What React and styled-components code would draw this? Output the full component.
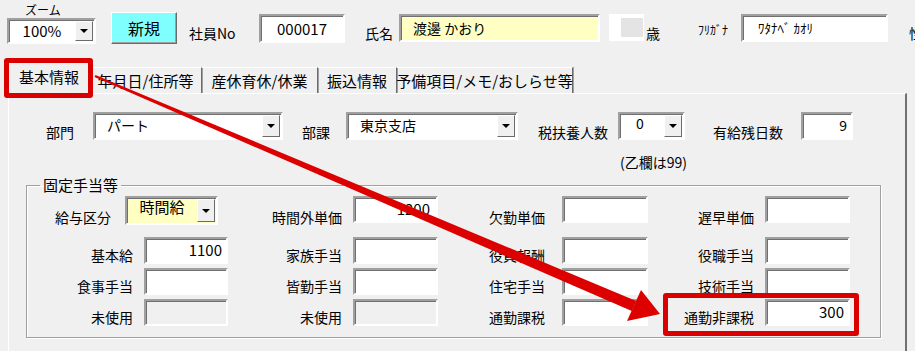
import React from "react";
import styled, { createGlobalStyle } from "styled-components";

const GlobalStyle = createGlobalStyle`
  html, body { margin: 0; padding: 0; background: #f0f0f0; }
  body {
    font-family: "Noto Sans CJK JP", "Noto Sans", sans-serif;
    font-size: 14px;
    color: #000;
  }
`;

const Page = styled.div`
  position: relative;
  width: 915px;
  height: 351px;
  overflow: hidden;
  background: #f0f0f0;
`;

/* ---------- header ---------- */

const TopBar = styled.div`
  display: flex;
  align-items: flex-start;
  height: 47px;
  padding-left: 7px;
  white-space: nowrap;
`;

const ZoomBlock = styled.div`
  display: flex;
  flex-direction: column;
  margin-top: 2px;
  flex: none;
`;

const SmallCaption = styled.span`
  font-size: 12px;
  line-height: 16px;
  margin-left: 18px;
`;

const NewButton = styled.button`
  flex: none;
  width: 66px;
  height: 32px;
  margin: 12px 0 0 15px;
  padding: 0;
  background: #80ffff;
  border: 1px solid;
  border-color: #fff #6b6b6b #6b6b6b #fff;
  box-shadow: inset -1px -1px 0 #a0a0a0;
  font-family: inherit;
  font-size: 16px;
  color: #000;
`;

const HeadLabel = styled.span`
  width: ${p => p.$w}px;
  margin: ${p => p.$top || 25}px 0 0 ${p => p.$ml || 0}px;
  font-size: ${p => p.$size || 14}px;
  line-height: 16px;
  flex: none;
`;

const Field = styled.div`
  box-sizing: border-box;
  display: flex;
  align-items: ${p => (p.$center ? "center" : "flex-start")};
  justify-content: ${p => (p.$align === "right" ? "flex-end" : p.$align === "center" ? "center" : "flex-start")};
  width: ${p => p.$w}px;
  height: ${p => p.$h || 27}px;
  margin-top: ${p => p.$top || 0}px;
  padding: ${p => (p.$center ? "0" : "2px")} ${p => p.$pr ?? 6}px 0 ${p => p.$pl ?? 6}px;
  background: ${p => p.$bg || "#fff"};
  border: 2px solid;
  border-color: #a0a0a0 #fff #fff #a0a0a0;
  box-shadow: inset 1px 1px 0 #707070;
  font-size: ${p => p.$size || 14}px;
  line-height: 18px;
  flex: none;
  white-space: nowrap;
`;

const AgeBox = styled.div`
  width: 35px;
  height: 27px;
  margin: 14px 0 0 9px;
  background: #fff;
  display: flex;
  align-items: center;
  justify-content: flex-end;
  padding-right: 1px;
  box-sizing: border-box;
  flex: none;
  &::after {
    content: "";
    width: 22px;
    height: 19px;
    background: #e4e4e4;
  }
`;

/* ---------- combo ---------- */

const ComboBox = styled.div`
  box-sizing: border-box;
  display: flex;
  align-items: stretch;
  width: ${p => p.$w}px;
  height: ${p => p.$h || 28}px;
  margin-left: ${p => p.$ml || 0}px;
  background: ${p => p.$bg || "#fff"};
  border: 2px solid;
  border-color: #a0a0a0 #fff #fff #a0a0a0;
  box-shadow: inset 1px 1px 0 #707070;
  flex: none;
`;

const ComboText = styled.span`
  flex: 1;
  padding: ${p => p.$pt ?? 0}px 0 0 ${p => p.$pl ?? 0}px;
  text-align: ${p => p.$align || "left"};
  line-height: ${p => p.$lh || 18}px;
  font-size: ${p => p.$size || 14}px;
  white-space: nowrap;
`;

const DropButton = styled.span`
  width: 18px;
  margin: 1px 1px 1px 0;
  background: #f0f0f0;
  border: 1px solid;
  border-color: #fff #6b6b6b #6b6b6b #fff;
  box-sizing: border-box;
  display: flex;
  align-items: center;
  justify-content: center;
  &::after {
    content: "";
    border-left: 4px solid transparent;
    border-right: 4px solid transparent;
    border-top: 4px solid #000;
  }
`;

const Combo = ({ w, h, ml, bg, children, align, pl, pt, lh, size }) => (
  <ComboBox $w={w} $h={h} $ml={ml} $bg={bg}>
    <ComboText $align={align} $pl={pl} $pt={pt} $lh={lh} $size={size}>{children}</ComboText>
    <DropButton />
  </ComboBox>
);

/* ---------- tabs ---------- */

const TabRow = styled.div`
  display: flex;
  align-items: flex-end;
  height: 31px;
  margin-top: 15px;
  padding-left: 8px;
`;

const Tab = styled.div`
  box-sizing: border-box;
  flex: none;
  width: ${p => p.$w}px;
  height: ${p => (p.$active ? 31 : 26)}px;
  display: flex;
  align-items: center;
  justify-content: center;
  border-top: 1px solid #fff;
  border-left: ${p => (p.$active ? "1px solid #fff" : "none")};
  border-right: ${p => (p.$active ? "1px solid #a0a0a0" : "1px solid #6b6b6b")};
  box-shadow: ${p => (p.$active ? "none" : "1px 0 0 #a0a0a0")};
  padding-bottom: ${p => (p.$active ? 3 : 0)}px;
  font-size: 15px;
  white-space: nowrap;
`;

/* ---------- panel ---------- */

const Panel = styled.div`
  box-sizing: border-box;
  width: 899px;
  height: 260px;
  margin-left: 8px;
  border-top: 1px solid #fff;
  border-left: 1px solid #fff;
  border-right: 2px solid #707070;
`;

const TopRow = styled.div`
  display: flex;
  align-items: flex-end;
  height: 28px;
  margin-top: 18px;
`;

const RowLabel = styled.span`
  width: ${p => p.$w}px;
  margin-left: ${p => p.$ml || 0}px;
  line-height: 16px;
  flex: none;
  white-space: nowrap;
`;

const Note = styled.div`
  margin: 13px 0 0 611px;
  line-height: 18px;
`;

const Group = styled.fieldset`
  box-sizing: border-box;
  width: 855px;
  height: 161px;
  margin: 6px 0 0 17px;
  padding: 3px 0 0 0;
  border: 1px solid #a0a0a0;
  box-shadow: 1px 1px 0 #fff, inset 1px 1px 0 #fff;
`;

const Legend = styled.legend`
  margin-left: 13px;
  padding: 0 3px;
  font-size: 15px;
  line-height: 16px;
`;

const FieldGrid = styled.div`
  display: grid;
  grid-template-columns: 117px 84px 125px 85px 124px 86px 117px 85px;
  grid-auto-rows: ${p => p.$row || 27}px;
  row-gap: 4px;
  margin-top: ${p => p.$top || 0}px;
`;

const GridLabel = styled.span`
  align-self: end;
  text-align: right;
  padding-right: ${p => p.$pr || 11}px;
  margin-bottom: ${p => p.$mb ?? 0}px;
  line-height: 18px;
  white-space: nowrap;
`;

const PayCell = styled.div`
  grid-column: span 2;
  display: flex;
  align-items: flex-end;
`;

/* ---------- annotations ---------- */

const Highlight = styled.div`
  position: absolute;
  left: ${p => p.$x}px;
  top: ${p => p.$y}px;
  width: ${p => p.$w}px;
  height: ${p => p.$h}px;
  box-sizing: border-box;
  border: 5px solid #db0000;
  border-radius: 3px;
  pointer-events: none;
`;

const ArrowLayer = styled.svg`
  position: absolute;
  left: 0;
  top: 0;
  pointer-events: none;
`;

const allowances = [
  [
    ["基本給", "1100"],
    ["家族手当", ""],
    ["役員報酬", ""],
    ["役職手当", ""],
  ],
  [
    ["食事手当", ""],
    ["皆勤手当", ""],
    ["住宅手当", ""],
    ["技術手当", ""],
  ],
  [
    ["未使用", "", true],
    ["未使用", "", true],
    ["通勤課税", ""],
    ["通勤非課税", "300"],
  ],
];

const widths = [84, 85, 86, 85];

export default function App() {
  return (
    <Page>
      <GlobalStyle />
      <TopBar>
        <ZoomBlock>
          <SmallCaption>ズーム</SmallCaption>
          <Combo w={89} h={26} align="center" pl={0} lh={22} size={15}>100%</Combo>
        </ZoomBlock>
        <NewButton>新規</NewButton>
        <HeadLabel $w={70} $ml={12}>社員No</HeadLabel>
        <Field $w={86} $h={29} $top={14} $center $align="center" $size={15}>000017</Field>
        <HeadLabel $w={34} $ml={20}>氏名</HeadLabel>
        <Field $w={201} $h={28} $top={14} $center $bg="#ffffc4" $pl={12}>渡邊 かおり</Field>
        <AgeBox />
        <HeadLabel $w={52} $ml={2}>歳</HeadLabel>
        <HeadLabel $w={43} $size={12} $top={22}>ﾌﾘｶﾞﾅ</HeadLabel>
        <Field $w={147} $h={28} $top={14} $center $pl={15} $size={13}>ﾜﾀﾅﾍﾞ ｶｵﾘ</Field>
        <HeadLabel $w={20} $ml={21}>性</HeadLabel>
      </TopBar>

      <TabRow>
        <Tab $w={82} $active>基本情報</Tab>
        <Tab $w={112}>年月日/住所等</Tab>
        <Tab $w={116}>産休育休/休業</Tab>
        <Tab $w={79}>振込情報</Tab>
        <Tab $w={176}>予備項目/メモ/おしらせ等</Tab>
      </TabRow>

      <Panel>
        <TopRow>
          <RowLabel $w={47} $ml={37}>部門</RowLabel>
          <Combo w={190} pl={12} pt={2}>パート</Combo>
          <RowLabel $w={44} $ml={19}>部課</RowLabel>
          <Combo w={172} pl={12} pt={2}>東京支店</Combo>
          <RowLabel $w={80} $ml={20}>税扶養人数</RowLabel>
          <Combo w={67} pl={16} pt={0}>0</Combo>
          <RowLabel $w={88} $ml={28}>有給残日数</RowLabel>
          <Field $w={52} $h={28} $align="right" $pr={4}>9</Field>
        </TopRow>
        <Note>(乙欄は99)</Note>

        <Group>
          <Legend>固定手当等</Legend>
          <FieldGrid $row={29}>
            <PayCell>
              <RowLabel $w={70} $ml={28}>給与区分</RowLabel>
              <Combo w={93} h={29} bg="#ffffc4" align="center" pt={0} size={15}>時間給</Combo>
            </PayCell>
            <GridLabel $mb={-1}>時間外単価</GridLabel>
            <Field $w={85} $align="right" $pr={6} $size={15}>1200</Field>
            <GridLabel $pr={17} $mb={-1}>欠勤単価</GridLabel>
            <Field $w={86} />
            <GridLabel $mb={-1}>遅早単価</GridLabel>
            <Field $w={85} />
          </FieldGrid>
          <FieldGrid $top={12}>
            {allowances.map((row, r) =>
              row.map(([label, value, disabled], c) => (
                <React.Fragment key={`${r}-${c}`}>
                  <GridLabel $pr={c === 2 ? 17 : 11}>{label}</GridLabel>
                  <Field
                    $w={widths[c]}
                    $align="right"
                    $pr={4}
                    $size={15}
                    $bg={disabled ? "#f0f0f0" : "#fff"}
                  >
                    {value}
                  </Field>
                </React.Fragment>
              ))
            )}
          </FieldGrid>
        </Group>
      </Panel>

      <Highlight $x={4} $y={58} $w={89} $h={40} />
      <Highlight $x={663} $y={293} $w={196} $h={43} />

      <ArrowLayer width="915" height="351" viewBox="0 0 915 351">
        <polygon
          points="94.5,77.1 95.5,74.9 636.2,300.9 631.8,311.1"
          fill="#dc0000"
        />
        <polygon points="660,314 641,290 627,321" fill="#dc0000" />
      </ArrowLayer>
    </Page>
  );
}
